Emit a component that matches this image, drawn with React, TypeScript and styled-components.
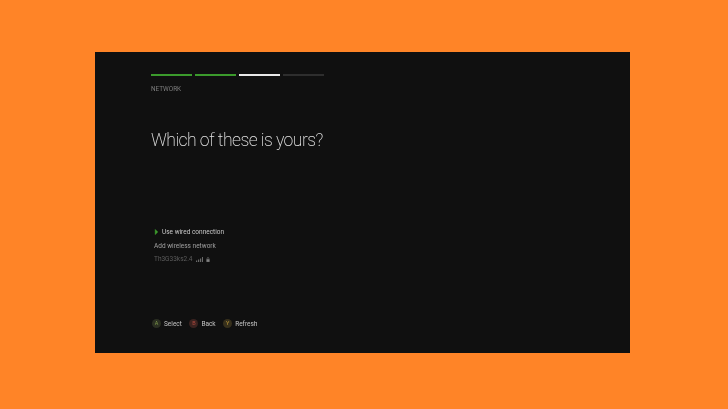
import React from "react";
import styled, { createGlobalStyle } from "styled-components";

const Global = createGlobalStyle`
  html, body { margin: 0; padding: 0; background: #ff8427; }
  body { width: 728px; height: 409px; overflow: hidden; font-family: Roboto, "Noto Sans", sans-serif; }
`;

const Page = styled.div`
  width: 728px;
  height: 409px;
  box-sizing: border-box;
  padding: 52px 98px 56px 95px;
  background: #ff8427;
`;

const Panel = styled.main`
  height: 301px;
  box-sizing: border-box;
  padding: 22px 56px 0;
  background: #101010;
  display: flex;
  flex-direction: column;
`;

const Steps = styled.div`
  display: flex;
  gap: 3px;
`;

const Step = styled.div<{ $color: string }>`
  width: 41px;
  height: 2px;
  background: ${(p) => p.$color};
`;

const Eyebrow = styled.div`
  margin-top: 9px;
  font-size: 6.4px;
  line-height: 9px;
  color: #7d7d7d;
  filter: blur(0.25px);
`;

const Title = styled.h1`
  margin: 32.5px 0 0;
  font-size: 17.6px;
  line-height: 26px;
  font-weight: 200;
  letter-spacing: -0.55px;
  color: #e2e2e2;
  filter: blur(0.2px);
`;

const List = styled.ul`
  list-style: none;
  margin: 74.5px 0 0;
  padding: 0 0 0 3px;
  display: flex;
  flex-direction: column;
  gap: 3.7px;
  filter: blur(0.3px);
`;

const Item = styled.li<{ $color: string }>`
  height: 10px;
  display: flex;
  align-items: center;
  font-size: 6.5px;
  line-height: 10px;
  color: ${(p) => p.$color};
`;

const Chevron = styled.svg`
  width: 5px;
  height: 6px;
  margin-right: 3px;
`;

const NetIcon = styled.svg`
  width: 7px;
  height: 5px;
  margin-left: 3px;
`;

const LockIcon = styled.svg`
  width: 4px;
  height: 5px;
  margin-left: 3px;
`;

const Legend = styled.div`
  margin-top: 54.6px;
  padding-left: 1px;
  display: flex;
  align-items: center;
  gap: 7.5px;
  filter: blur(0.3px);
`;

const LegendItem = styled.div`
  display: flex;
  align-items: center;
  gap: 3px;
  font-size: 6.5px;
  line-height: 10px;
  color: #c4c4c4;
`;

const Badge = styled.span<{ $color: string; $bg: string }>`
  width: 9px;
  height: 9px;
  border-radius: 50%;
  background: ${(p) => p.$bg};
  color: ${(p) => p.$color};
  font-size: 5.5px;
  line-height: 9px;
  text-align: center;
`;

export default function App() {
  return (
    <>
      <Global />
      <Page>
        <Panel>
          <Steps>
            <Step $color="#3b9a2c" />
            <Step $color="#3b9a2c" />
            <Step $color="#e8e8e8" />
            <Step $color="#2e2e2e" />
          </Steps>
          <Eyebrow>NETWORK</Eyebrow>
          <Title>Which of these is yours?</Title>
          <List>
            <Item $color="#c8c8c8">
              <Chevron viewBox="0 0 5 7">
                <path d="M1 0.5 L4 3.5 L1 6.5 Z" fill="#3fa02f" stroke="#3fa02f" strokeWidth="0.6" />
              </Chevron>
              <span>Use wired connection</span>
            </Item>
            <Item $color="#a0a0a0">Add wireless network</Item>
            <Item $color="#5c5c5c">
              Th3G33ks2.4
              <NetIcon viewBox="0 0 7 5">
                <path d="M0 3.5h1.2V5H0zM2 2.5h1.2V5H2zM4 1.5h1.2V5H4zM6 0h1v5H6z" fill="#6a6a6a" />
              </NetIcon>
              <LockIcon viewBox="0 0 5 6">
                <path d="M0.5 2.6h4V6h-4z" fill="#808080" />
                <path d="M1.4 2.6V1.6a1.1 1.1 0 0 1 2.2 0v1" fill="none" stroke="#808080" strokeWidth="0.7" />
              </LockIcon>
            </Item>
          </List>
          <Legend>
            <LegendItem>
              <Badge $bg="#2b2f22" $color="#7f9a4a">A</Badge>
              Select
            </LegendItem>
            <LegendItem>
              <Badge $bg="#3a2320" $color="#b0483e">B</Badge>
              Back
            </LegendItem>
            <LegendItem>
              <Badge $bg="#37301c" $color="#c09a3a">Y</Badge>
              Refresh
            </LegendItem>
          </Legend>
        </Panel>
      </Page>
    </>
  );
}
